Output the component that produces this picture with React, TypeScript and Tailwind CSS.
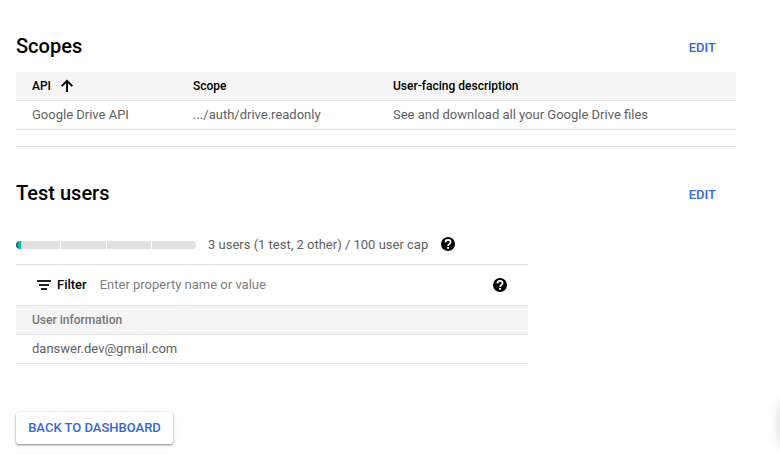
import React from 'react';

function Help() {
  return (
    <svg width="14" height="14" viewBox="0 0 14 14" className="shrink-0">
      <circle cx="7" cy="7" r="7" fill="#000" />
      <path d="M4.4 5.4C4.4 3.8 5.5 2.9 7 2.9s2.6.9 2.6 2.3C9.6 6.8 7.1 7 7.1 9" fill="none" stroke="#fff" strokeWidth="1.7" />
      <path d="M6.1 9.9h1.9v1.8H6.1z" fill="#fff" />
    </svg>
  );
}

function SectionHeader({ title }: { title: string }) {
  return (
    <div className="flex h-7 w-[720px] items-center justify-between pr-5">
      <h2 className="text-[20px] leading-7 font-medium tracking-[0.01px] text-black">{title}</h2>
      <button className="mt-1 text-[13px] leading-5 font-medium text-[#3367d6]">EDIT</button>
    </div>
  );
}

export default function App() {
  return (
    <div className="relative h-[455px] w-[780px] overflow-hidden bg-white pt-8 pl-4 font-[Roboto,sans-serif] text-[13px] text-[#616161]">
      <SectionHeader title="Scopes" />
      <div className="mt-3 w-[720px] border-b border-[#e0e0e0] pb-4">
        <div className="grid h-[29px] grid-cols-[161px_200px_1fr] items-center border-b border-[#e0e0e0] bg-[#f5f5f5] pl-4 text-[12px] font-medium text-black">
          <div className="flex items-center gap-[10px]">
            API
            <svg width="12" height="14" viewBox="0 0 12 14" fill="none" stroke="#000" strokeWidth="2" className="shrink-0"><path d="M6 13V2M.7 7.1 6 1.8l5.3 5.3" /></svg>
          </div>
          <div>Scope</div>
          <div>User-facing description</div>
        </div>
        <div className="grid h-[29px] grid-cols-[161px_200px_1fr] items-center border-b border-[#e0e0e0] pl-4">
          <div>Google Drive API</div>
          <div>.../auth/drive.readonly</div>
          <div>See and download all your Google Drive files</div>
        </div>
      </div>
      <div className="mt-8">
        <SectionHeader title="Test users" />
      </div>
      <div className="mt-7 flex h-5 items-center">
        <div className="flex h-2 w-[180px] gap-px overflow-hidden rounded-[4px]">
          <div className="flex flex-1 bg-[#e0e0e0]"><div className="w-[2px] bg-[#455a64]" /><div className="w-[3px] bg-[#00bfa5]" /></div>
          <div className="flex-1 bg-[#e0e0e0]" />
          <div className="flex-1 bg-[#e0e0e0]" />
          <div className="flex-1 bg-[#e0e0e0]" />
        </div>
        <span className="mr-[13px] ml-3">3 users (1 test, 2 other) / 100 user cap</span>
        <div className="-mt-[2px]"><Help /></div>
      </div>
      <div className="mt-[9px] w-[512px] border-t border-[#e0e0e0]">
        <div className="flex h-10 items-center pr-[21px] pl-[21px]">
          <svg width="14" height="10" viewBox="0 0 14 10" fill="#212121" className="shrink-0"><path d="M0 0h14v2H0zM2 4h10v2H2zM4 8h6v2H4z" /></svg>
          <span className="ml-[6px] font-medium text-black">Filter</span>
          <span className="ml-[13px] flex-1 text-[#808080]">Enter property name or value</span>
          <Help />
        </div>
        <div className="flex h-[30px] items-center border-y border-[#e0e0e0] bg-[#f5f5f5] pl-4 text-[12px] font-medium text-[#757575]">User information</div>
        <div className="flex h-[29px] items-center border-b border-[#e0e0e0] pl-4">danswer.dev@gmail.com</div>
      </div>
      <button className="mt-12 flex h-8 w-[157px] items-center justify-center rounded-[3px] bg-white text-[13px] font-medium text-[#3367d6] shadow-[0_1px_2px_rgba(0,0,0,0.4),0_1px_5px_rgba(0,0,0,0.12)]">BACK TO DASHBOARD</button>
      <div className="absolute top-[402px] left-[781px] h-9 w-10 shadow-[0_4px_14px_rgba(0,0,0,0.2)]" />
    </div>
  );
}
